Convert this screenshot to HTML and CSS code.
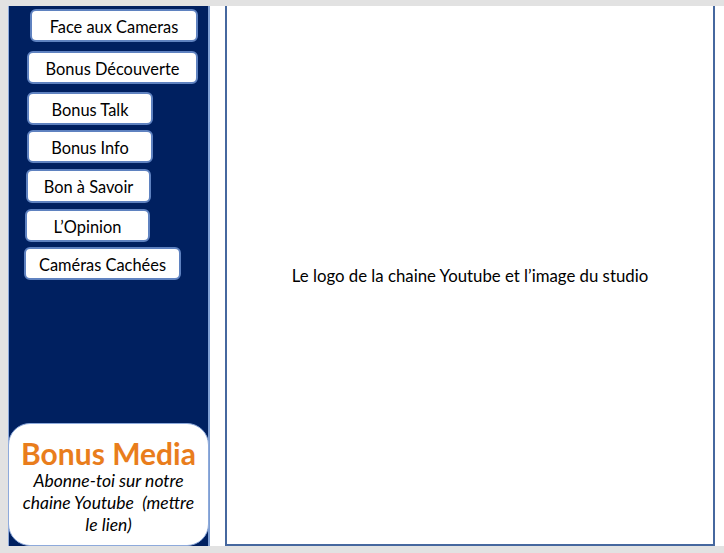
FILE: index.html
```html
<!DOCTYPE html>
<html lang="fr">
<head>
<meta charset="utf-8">
<title>Bonus Media</title>
<link rel="stylesheet" href="styles.css">
</head>
<body>
<div class="slide">
  <aside class="sidebar">
    <nav class="menu">
      <div class="btn btn-1">Face aux Cameras</div>
      <div class="btn btn-2">Bonus Découverte</div>
      <div class="btn btn-3">Bonus Talk</div>
      <div class="btn btn-4">Bonus Info</div>
      <div class="btn btn-5">Bon à Savoir</div>
      <div class="btn btn-6">L’Opinion</div>
      <div class="btn btn-7">Caméras Cachées</div>
    </nav>
    <div class="card">
      <div class="card-title">Bonus Media</div>
      <div class="card-text">Abonne-toi sur notre<br>chaine Youtube&nbsp; (mettre<br>le lien)</div>
    </div>
  </aside>
  <main class="main">
    <div class="frame">
      <p class="frame-text">Le logo de la chaine Youtube et l’image du studio</p>
    </div>
  </main>
</div>
</body>
</html>
```
FILE: styles.css
```css
html, body {
  margin: 0;
  padding: 0;
}
body {
  background: #e2e2e2;
  width: 724px;
  height: 553px;
  overflow: hidden;
  font-family: Lato, "Open Sans", sans-serif;
  color: #000;
}
.slide {
  margin: 6px 0 0 8px;
  width: 716px;
  height: 540px;
  background: #fff;
  display: flex;
}
.sidebar {
  width: 199px;
  background: #002060;
  border-left: 1px solid #8eaadb;
  border-right: 2px solid #7f9fd3;
  display: flex;
  flex-direction: column;
}
.menu {
  display: flex;
  flex-direction: column;
  align-items: flex-start;
}
.btn {
  box-sizing: border-box;
  height: 33px;
  padding-top: 1px;
  background: #fff;
  border: 2px solid #5f82c0;
  border-radius: 6px;
  display: flex;
  align-items: center;
  justify-content: center;
  font-size: 16.4px;
  white-space: nowrap;
}
.btn-1 { margin: 3px 0 0 21px; width: 168px; }
.btn-2 { margin: 9px 0 0 18px; width: 171px; }
.btn-3 { margin: 8px 0 0 18px; width: 126px; }
.btn-4 { margin: 5px 0 0 18px; width: 126px; }
.btn-5 { margin: 6px 0 0 17px; width: 125px; height: 34px; }
.btn-6 { margin: 6px 0 0 16px; width: 125px; }
.btn-7 { margin: 5px 0 0 15px; width: 157px; }
.card {
  margin-top: auto;
  margin-left: -1px;
  margin-right: -1px;
  box-sizing: border-box;
  height: 123px;
  background: #fff;
  border: 1px solid #8eaadb;
  border-radius: 22px;
  display: flex;
  flex-direction: column;
  align-items: center;
  padding: 12px 2px 0;
  text-align: center;
}
.card-title {
  color: #e97d1c;
  font-weight: 700;
  font-size: 30px;
  line-height: 34px;
}
.card-text {
  font-style: italic;
  font-size: 17.5px;
  line-height: 22px;
  white-space: nowrap;
}
.main {
  flex: 1;
  padding: 0 9px 0 15px;
  display: flex;
}
.frame {
  flex: 1;
  box-sizing: border-box;
  border: 2px solid #46689f;
  border-top: none;
  display: flex;
  align-items: center;
  justify-content: center;
}
.frame-text {
  margin: 0;
  font-size: 16.8px;
}
```
